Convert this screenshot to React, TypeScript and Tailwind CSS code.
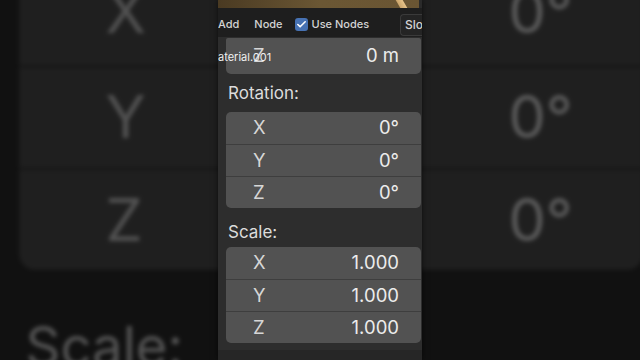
import { Check } from "lucide-react";

const font = { fontFamily: "Inter, 'Noto Sans', sans-serif" };

function Row({ label, value, first }: { label: string; value: string; first?: boolean }) {
  return (
    <div
      className={`flex items-center justify-between pl-[27px] pr-[22px] text-[18.5px] ${
        first ? "h-[32px]" : "h-[32px] border-t border-[#3e3e3e]"
      }`}
    >
      <span className="text-[#d6d6d6]">{label}</span>
      <span className="text-[#ececec]">{value}</span>
    </div>
  );
}

function Box({ rows }: { rows: [string, string][] }) {
  return (
    <div className="ml-[8px] w-[195px] rounded-[5px] bg-[#525252] overflow-hidden">
      {rows.map(([l, v], i) => (
        <Row key={l} label={l} value={v} first={i === 0} />
      ))}
    </div>
  );
}

function Panel() {
  return (
    <div className="w-[204px] h-[360px] flex flex-col bg-[#2d2d2d] overflow-hidden" style={font}>
      {/* render preview strip */}
      <div className="h-[8px] bg-gradient-to-r from-[#4a3a22] via-[#6b5734] to-[#6a5533] flex justify-end overflow-hidden">
        <div className="w-[7px] h-full mr-[14px] bg-gradient-to-r from-[#c9a36a] to-[#e8c48a] skew-x-[30deg]" />
        <div className="w-[3px] h-full bg-[#2a2a2a]" />
      </div>

      {/* node header */}
      <div className="h-[29px] bg-[#1e1e1e] flex items-center pt-[4px] text-[11px] font-medium text-[#d4d4d4]">
        <span>Add</span>
        <span className="ml-[15px]">Node</span>
        <span className="ml-[12px] w-[13px] h-[13px] rounded-[3px] bg-[#4772b3] flex items-center justify-center">
          <Check size={11} strokeWidth={3.5} color="#ffffff" />
        </span>
        <span className="ml-[4px]">Use Nodes</span>
        <span className="ml-auto h-[22px] w-[22px] rounded-l-[4px] border border-r-0 border-[#3a3a3a] bg-[#242424] flex items-center pl-[4px] text-[12px] overflow-hidden">
          Slo
        </span>
      </div>

      {/* location Z (partially scrolled) */}
      <div className="relative h-[37px] pt-[1px]">
        <div className="ml-[8px] w-[195px] h-[36px] rounded-b-[5px] rounded-t-[2px] bg-[#525252] flex items-center justify-between pl-[27px] pr-[22px] text-[18.5px]">
          <span className="text-[#d6d6d6]">Z</span>
          <span className="text-[#ececec]">0 m</span>
        </div>
        <span className="absolute left-0 top-[12px] text-[11px] text-[#f0f0f0]">aterial.001</span>
      </div>

      <div className="h-[38px] pl-[10px] pt-[9px] text-[17px] leading-[20px] text-[#dcdcdc]">Rotation:</div>
      <Box rows={[["X", "0°"], ["Y", "0°"], ["Z", "0°"]]} />

      <div className="h-[39px] pl-[10px] pt-[14px] text-[17px] leading-[20px] text-[#dcdcdc]">Scale:</div>
      <Box rows={[["X", "1.000"], ["Y", "1.000"], ["Z", "1.000"]]} />

      <div className="h-[7px]" />
      <div className="flex-1 bg-[#262626]" />
    </div>
  );
}

export default function App() {
  return (
    <div className="w-[640px] h-[360px] grid overflow-hidden bg-[#111111]">
      {/* blurred enlarged backdrop */}
      <div className="[grid-area:1/1] overflow-hidden">
        <div className="ml-[218px] origin-[102px_180px] scale-[3.2] brightness-[0.38] blur-[0.6px]">
          <Panel />
        </div>
      </div>
      <div className="[grid-area:1/1] relative z-10 ml-[218px] w-[204px] h-[360px] shadow-[0_0_6px_rgba(0,0,0,0.6)]">
        <Panel />
      </div>
    </div>
  );
}
